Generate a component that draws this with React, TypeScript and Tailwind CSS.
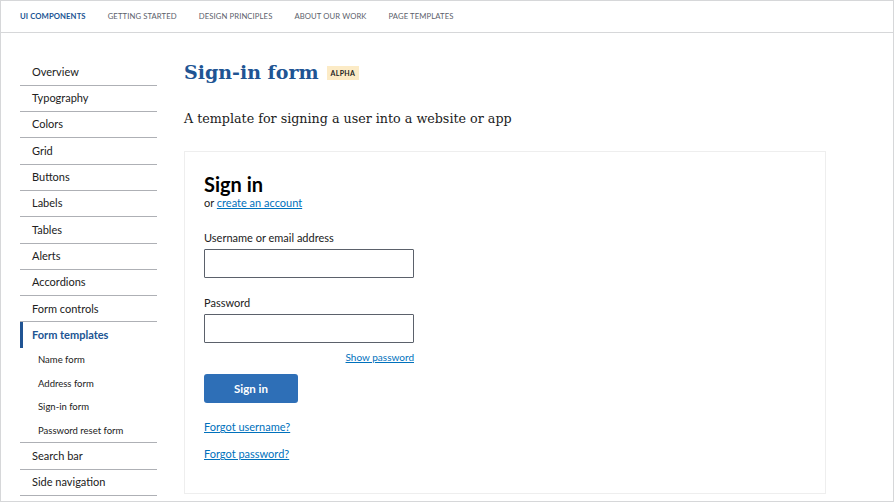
import React from 'react';

const sans = { fontFamily: 'Lato, "Open Sans", sans-serif' };

const topNav = ['UI COMPONENTS', 'GETTING STARTED', 'DESIGN PRINCIPLES', 'ABOUT OUR WORK', 'PAGE TEMPLATES'];

const sideTop = ['Overview', 'Typography', 'Colors', 'Grid', 'Buttons', 'Labels', 'Tables', 'Alerts', 'Accordions', 'Form controls'];
const subItems = ['Name form', 'Address form', 'Sign-in form', 'Password reset form'];
const sideBottom = ['Search bar', 'Side navigation'];

const SideItem: React.FC<{ label: string }> = ({ label }) => (
  <li className="h-[26.3px] border-b border-[#aeb0b5] flex items-center pl-[12px] text-[11px] text-[#212121]">
    {label}
  </li>
);

export default function App() {
  return (
    <div className="w-[895px] h-[504px] bg-white overflow-hidden" style={sans}>
      <div className="w-[894px] h-[502px] border border-[#d6d7d9] overflow-hidden">
        <header className="h-[32px] border-b border-[#d6d7d9] flex items-center pl-[19px] gap-[22px] text-[7.7px] tracking-[0.1px]">
          {topNav.map((t, i) => (
            <span key={t} className={i === 0 ? 'font-bold text-[#205493]' : 'text-[#5b616b]'}>
              {t}
            </span>
          ))}
        </header>

        <div className="flex pl-[19px] pt-[25px]">
          <nav className="w-[137px] shrink-0 mt-[1.5px]">
            <ul>
              {sideTop.map((s) => (
                <SideItem key={s} label={s} />
              ))}
              <li>
                <div className="h-[26px] border-l-[3px] border-[#205493] flex items-center pl-[9px] text-[11px] font-bold text-[#205493]">
                  Form templates
                </div>
                <ul className="border-b border-[#aeb0b5]">
                  {subItems.map((s) => (
                    <li key={s} className="h-[23.5px] flex items-center pl-[18px] text-[9.5px] text-[#212121]">
                      {s}
                    </li>
                  ))}
                </ul>
              </li>
              {sideBottom.map((s) => (
                <SideItem key={s} label={s} />
              ))}
            </ul>
          </nav>

          <main className="ml-[27px] flex-1">
            <div className="flex items-center gap-[8px] h-[28px]">
              <h1 className="text-[19px] font-bold text-[#205493] leading-none" style={{ fontFamily: '"DejaVu Serif", serif' }}>
                Sign-in form
              </h1>
              <span className="bg-[#fcebc6] text-[#212121] text-[7px] font-bold px-[4px] py-[2px] tracking-[0.3px] mt-[2px]">
                ALPHA
              </span>
            </div>

            <p className="mt-[23px] text-[12.7px] text-[#212121]" style={{ fontFamily: '"DejaVu Serif", serif' }}>
              A template for signing a user into a website or app
            </p>

            <div className="mt-[23px] w-[642px] h-[343px] border border-[#eeeeee] pl-[19px] pt-[20px]">
              <h2 className="text-[20px] font-bold text-[#000] leading-[24px]">Sign in</h2>
              <p className="text-[11px] text-[#212121] leading-[14px]">
                or <a className="text-[#0071bc] underline">create an account</a>
              </p>

              <label className="block mt-[21px] text-[11px] text-[#212121] leading-[14px]">Username or email address</label>
              <div className="mt-[4px] w-[210px] h-[29px] border border-[#5b616b] rounded-[1px]" />

              <label className="block mt-[18px] text-[11px] text-[#212121] leading-[14px]">Password</label>
              <div className="mt-[4px] w-[210px] h-[29px] border border-[#5b616b] rounded-[1px]" />
              <div className="w-[210px] flex justify-end mt-[8px]">
                <a className="text-[10px] text-[#0071bc] underline leading-[12px]">Show password</a>
              </div>

              <button className="mt-[11px] w-[94px] h-[29px] rounded-[3px] bg-[#2e6fb7] text-white text-[11.5px] font-bold">
                Sign in
              </button>

              <div className="mt-[17px] text-[11px] leading-[14px]">
                <a className="text-[#0071bc] underline">Forgot username?</a>
              </div>
              <div className="mt-[13px] text-[11px] leading-[14px]">
                <a className="text-[#0071bc] underline">Forgot password?</a>
              </div>
            </div>
          </main>
        </div>
      </div>
    </div>
  );
}
